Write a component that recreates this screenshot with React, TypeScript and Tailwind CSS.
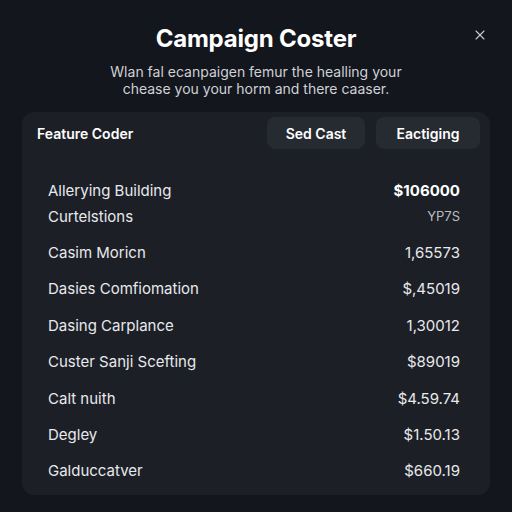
import React from 'react';
import { X } from 'lucide-react';

const rows = [
  { label: 'Casim Moricn', value: '1,65573' },
  { label: 'Dasies Comfiomation', value: '$,45019' },
  { label: 'Dasing Carplance', value: '1,30012' },
  { label: 'Custer Sanji Scefting', value: '$89019' },
  { label: 'Calt nuith', value: '$4.59.74' },
  { label: 'Degley', value: '$1.50.13' },
  { label: 'Galduccatver', value: '$660.19' },
];

export default function App() {
  return (
    <div
      className="relative w-[512px] h-[512px] bg-[#13161d] flex flex-col items-center text-[#e8e9ec] overflow-hidden"
      style={{ fontFamily: 'Inter, "Liberation Sans", sans-serif' }}
    >
      {/* Close */}
      <button className="absolute top-[27px] right-[24px] text-[#c9cbd0]">
        <X className="h-4 w-4" strokeWidth={1.6} />
      </button>

      {/* Header */}
      <h1 className="mt-[23px] h-[32px] leading-[32px] text-[24px] font-bold text-white tracking-[-0.2px]">
        Campaign Coster
      </h1>
      <p className="mt-[8px] text-center text-[14px] leading-[17px] text-[#cfd1d5]">
        Wlan fal ecanpaigen femur the healling your
        <br />
        chease you your horm and there caaser.
      </p>

      {/* Panel */}
      <div className="mt-[15px] w-[468px] h-[383px] rounded-[12px] bg-[#1c1f26] flex flex-col">
        <div className="flex items-center pl-[15px] pr-[10px] pt-[5px]">
          <span className="flex-1 text-[14px] font-semibold text-white">Feature Coder</span>
          <div className="flex gap-[11px]">
            <span className="w-[98px] h-[32px] rounded-[8px] bg-[#262a31] flex items-center justify-center text-[14px] font-semibold text-white">
              Sed Cast
            </span>
            <span className="w-[104px] h-[32px] rounded-[8px] bg-[#262a31] flex items-center justify-center text-[14px] font-semibold text-white">
              Eactiging
            </span>
          </div>
        </div>

        <div className="mt-[29px] pl-[26px] pr-[30px] flex flex-col text-[15px]">
          <div className="flex items-center justify-between h-[26px]">
            <span>Allerying Building</span>
            <span className="font-bold text-white">$106000</span>
          </div>
          <div className="flex items-center justify-between h-[26px] mb-[5px]">
            <span>Curtelstions</span>
            <span className="text-[13px] text-[#b9bcc2]">YP7S</span>
          </div>
          {rows.map((r) => (
            <div key={r.label} className="flex items-center justify-between h-[36.4px]">
              <span>{r.label}</span>
              <span>{r.value}</span>
            </div>
          ))}
        </div>
      </div>
    </div>
  );
}
